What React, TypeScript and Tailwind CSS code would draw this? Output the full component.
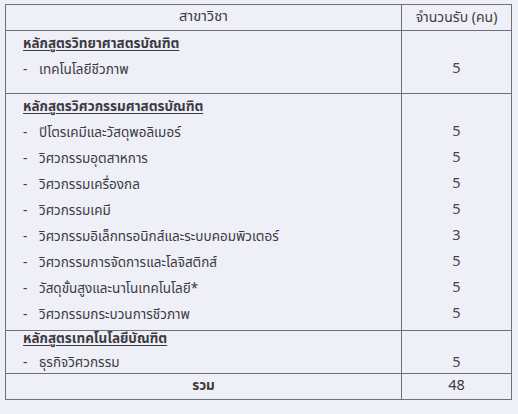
import React from "react";

type Section = { title: string; items: [string, string][]; titleH: string; itemH: string; pad: string };

const sections: Section[] = [
  { title: "หลักสูตรวิทยาศาสตรบัณฑิต", items: [["เทคโนโลยีชีวภาพ", "5"]], titleH: "h-[26px]", itemH: "h-[26px]", pad: "pb-[10px]" },
  {
    title: "หลักสูตรวิศวกรรมศาสตรบัณฑิต",
    items: [
      ["ปิโตรเคมีและวัสดุพอลิเมอร์", "5"],
      ["วิศวกรรมอุตสาหการ", "5"],
      ["วิศวกรรมเครื่องกล", "5"],
      ["วิศวกรรมเคมี", "5"],
      ["วิศวกรรมอิเล็กทรอนิกส์และระบบคอมพิวเตอร์", "3"],
      ["วิศวกรรมการจัดการและโลจิสติกส์", "5"],
      ["วัสดุขั้นสูงและนาโนเทคโนโลยี*", "5"],
      ["วิศวกรรมกระบวนการชีวภาพ", "5"],
    ],
    titleH: "h-[26px]",
    itemH: "h-[26px]",
    pad: "pb-[2px]",
  },
  { title: "หลักสูตรเทคโนโลยีบัณฑิต", items: [["ธุรกิจวิศวกรรม", "5"]], titleH: "h-[17px]", itemH: "h-[25px] pt-[6px]", pad: "pb-0" },
];

export default function App() {
  return (
    <div
      className="w-[518px] h-[414px] bg-[#efeff7] pt-[4px] pl-[5px] text-[#3b3b42] text-[13.5px]"
      style={{ fontFamily: '"Noto Sans Thai", "Noto Sans", "Open Sans", sans-serif' }}
    >
      <div className="w-[507px] border border-[#707078] grid grid-cols-[396px_1fr]">
        <div className="h-[26px] border-b border-r border-[#707078] flex items-center justify-center text-[14.5px]">สาขาวิชา</div>
        <div className="h-[26px] border-b border-[#707078] flex items-center justify-center text-[14px]">จำนวนรับ (คน)</div>
        {sections.map((s, i) => (
          <React.Fragment key={i}>
            <div className={`border-b border-r border-[#707078] pl-[17px] ${s.pad}`}>
              <div className={`${s.titleH} flex items-center font-bold underline underline-offset-2 text-[13.5px]`}>{s.title}</div>
              {s.items.map(([name], j) => (
                <div key={j} className={`${s.itemH} flex items-center`}>
                  <span className="w-[16px]">-</span>
                  <span>{name}</span>
                </div>
              ))}
            </div>
            <div className={`border-b border-[#707078] text-[14.5px] text-[#45454c] ${s.pad}`}>
              <div className={s.titleH} />
              {s.items.map(([, n], j) => (
                <div key={j} className={`${s.itemH} flex items-center justify-center`}>{n}</div>
              ))}
            </div>
          </React.Fragment>
        ))}
        <div className="h-[25px] border-r border-[#707078] flex items-center justify-center font-bold text-[13.5px]">รวม</div>
        <div className="h-[25px] flex items-center justify-center text-[14.5px]">48</div>
      </div>
    </div>
  );
}
